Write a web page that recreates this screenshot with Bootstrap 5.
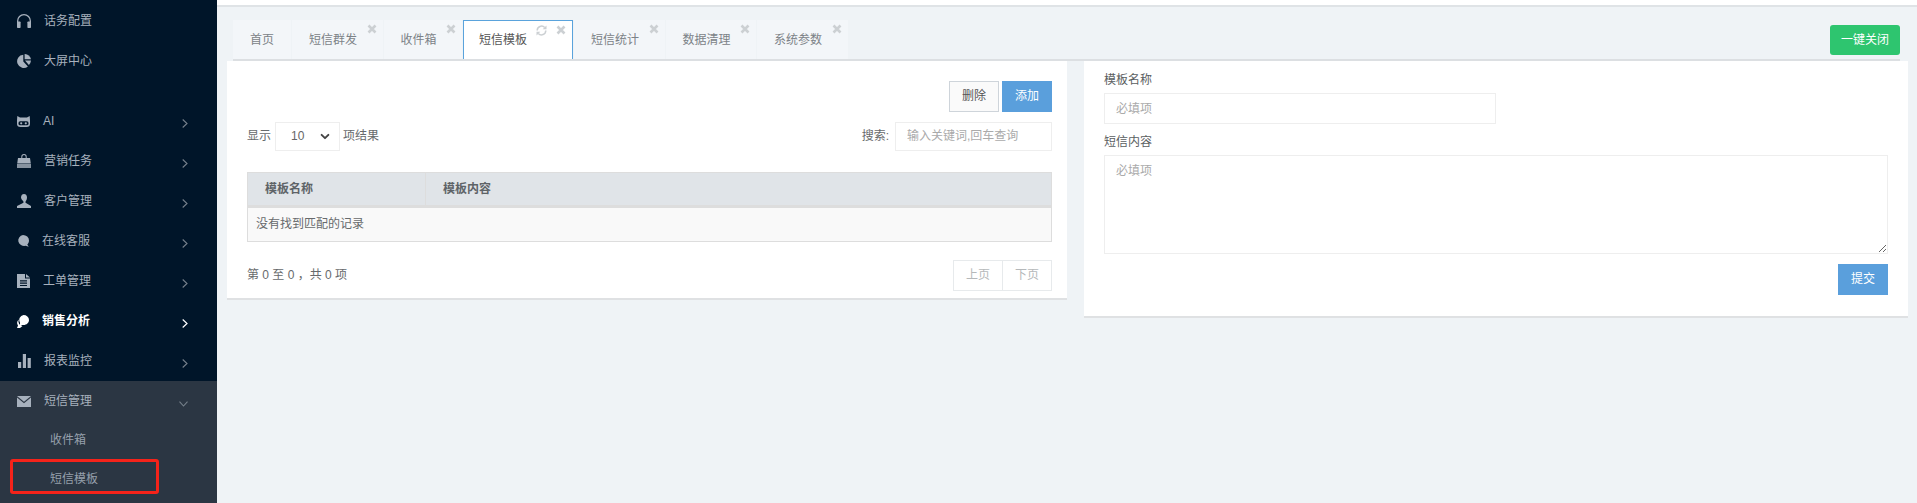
<!DOCTYPE html>
<html lang="zh-CN">
<head>
<meta charset="utf-8">
<title>短信模板</title>
<link href="https://cdn.jsdelivr.net/npm/bootstrap@5.3.0/dist/css/bootstrap.min.css" rel="stylesheet">
<style>
html,body{height:503px;overflow:hidden}
body{font:12px/1.4 "Liberation Sans","Noto Sans CJK SC",sans-serif;color:#676a6c;background:#eff3f6}
.shell{height:503px}
.side{width:217px;flex:none;background:#001529;height:503px;position:relative;padding-top:1px}
.side-item{height:40px;padding-left:17px;color:#a7b1bd;display:flex;align-items:center}
.side-item svg.ic{fill:#a7b1bd;flex:none;margin-right:13px}
.side-item .ch{margin-left:auto;margin-right:29px;flex:none;position:relative;top:2px}
.side-item.hot{color:#fff;font-weight:700}
.side-item.hot svg.ic{fill:#fff}
.side-gap{height:20px}
.side-open{background:#2b3643;height:122px}
.side-sub{height:39px;padding-left:50px;color:#96a0ac;display:flex;align-items:center}
.side-sub:first-of-type{margin-top:-1px}
.red-mark{position:absolute;left:10px;top:459px;width:149px;height:35px;border:3px solid #f5231a;border-radius:3px}
.work{min-width:0}
.top-strip{height:7px;background:#fff;border-bottom:2px solid #dfe3e6}
.tabbar{margin:0 17px 0 16px;height:54px;border-bottom:2px solid #dcdfe2;align-items:flex-end}
.tabx{height:39px;background:#f3f6f9;color:#7c8287;margin-right:1px;padding:0 17px;position:relative;display:flex;align-items:center;padding-top:1px}
.tabx.cl{padding-right:25.5px}
.tabx.on{background:#fff;color:#555;border:1px solid #5aa3dc;border-bottom:0;padding:1px 45px 0 15px}
.x-mark{position:absolute;top:4px;right:6px;width:10px;height:10px}
.re-mark{position:absolute;top:4px;right:25px;width:11px;height:11px}
.shut-btn{margin-left:auto;margin-bottom:4px;width:70px;height:30px;padding:0;font-size:12px;background:#2ec56f;border:0;color:#fff;border-radius:3px}
.panes{display:grid;grid-template-columns:840px 824px;column-gap:17px;margin-left:10px;align-items:start}
.pane{border:0;border-bottom:2px solid #dfe1e3;border-radius:0;background:#fff}
.pane-l{height:239px;padding:20px 15px 0 20px}
.pane-r{height:257px;padding:0 20px 0 20px}
.act-row{gap:3px}
.sq-btn{width:50px;height:31px;padding:0;font-size:12px;border-radius:0;line-height:29px}
.btn-gray{background:#fafafa;border:1px solid #ced4da;color:#555}
.btn-sky,.btn-sky:hover{background:#5a9fdc;border:1px solid #5a9fdc;color:#fff}
.row-len{margin-top:9px;height:30px}
.form-select.len-sel{width:65px;height:29px;padding:0 0 0 15px;font-size:12px;margin:0 3px 0 4px;border:1px solid #eee;border-radius:0;color:#666;background-position:right 8px center;background-size:12px 9px;background-image:url("data:image/svg+xml,%3csvg xmlns='http://www.w3.org/2000/svg' viewBox='0 0 16 16'%3e%3cpath fill='none' stroke='%23444' stroke-linecap='round' stroke-linejoin='round' stroke-width='3.4' d='m2 5 6 6 6-6'/%3e%3c/svg%3e")}
.form-control.plain{border:1px solid #eee;border-radius:0;font-size:12px;box-shadow:none;padding:0 11px;color:#666}
.form-control.plain::placeholder{color:#aaa}
.q-inp{width:157px;height:29px;margin-left:6px}
.table.grid-tb{margin:21px 0 0;width:805px;border-color:#ddd;table-layout:fixed;font-size:12px;color:#676a6c}
.table.grid-tb th{background:#e0e4e8;height:34px;padding:0 17px;vertical-align:middle;font-weight:700;color:#5e6367;border-width:1px 1px 3px;border-color:#ddd;--bs-table-bg:#e0e4e8}
.table.grid-tb td{background:#f9f9f9;height:35px;padding:0 8px;vertical-align:middle;border-color:#ddd;--bs-table-bg:#f9f9f9;color:#676a6c}
.foot-row{margin-top:18px}
.pager-x{margin:0}
.pager-x .page-link{width:50px;height:31px;padding:0;text-align:center;line-height:29px;font-size:12px;border-radius:0!important;border-color:#e7eaec;color:#b5b8ba;background:#fff}
.lab{margin:0;height:32px;line-height:38px;color:#5a5e61}
.pane-r .lab{display:block}
.pane-r .lab.two{height:31px;line-height:36px;margin-top:0}
.nm-inp{width:392px;height:31px}
.ta-inp{width:784px;height:99px;padding:6px 11px!important;resize:both}
.sub-row{margin-top:10px}
</style>
</head>
<body>
<div class="shell d-flex">
  <aside class="side">
    <div class="side-item"><svg class="ic" width="14" height="14" viewBox="0 0 14 14"><path d="M0 9V7a7 7 0 0 1 14 0v2h-1.300V7a5.700 5.700 0 0 0-11.400 0v2z"/><rect x="0" y="7.500" width="3.600" height="6.500" rx=".8"/><rect x="10.400" y="7.500" width="3.600" height="6.500" rx=".8"/></svg>话务配置</div>
    <div class="side-item"><svg class="ic" width="14" height="14" viewBox="0 0 14 14"><path d="M6.300.7v6.800l4.600 4.900A6.600 6.600 0 1 1 6.300.7z"/><path d="M7.600 0A6.300 6.300 0 0 1 14 5.300H7.600z"/><path d="M8 6.600h6a6.400 6.400 0 0 1-2.100 4.300z"/></svg>大屏中心</div>
    <div class="side-gap"></div>
    <div class="side-item"><svg class="ic" width="13" height="11" viewBox="0 0 13 11"><path d="M.3 0 3 1.500h7L12.700 0l.3 4.500V8q0 3-3.500 3h-6Q0 11 0 8V4.500z"/><rect x="1.500" y="5.300" width="10" height="4" rx="1.600" fill="#001529"/><circle cx="4.200" cy="7.300" r="1.100"/><circle cx="8.800" cy="7.300" r="1.100"/></svg>AI<svg class="ch" width="6" height="9" viewBox="0 0 6 9"><path d="m.7.500 4.300 4-4.300 4" fill="none" stroke="#76808b" stroke-width="1.100"/></svg></div>
    <div class="side-item"><svg class="ic" width="14" height="14" viewBox="0 0 14 14"><path d="M4.300 4V2.700a2.700 2.700 0 0 1 5.400 0V4h-1V2.700a1.700 1.700 0 0 0-3.400 0V4z"/><path d="M1 4h12l.8 5.400H.2z"/><path d="M0 10h14v4H0z" opacity=".8"/></svg>营销任务<svg class="ch" width="6" height="9" viewBox="0 0 6 9"><path d="m.7.500 4.300 4-4.300 4" fill="none" stroke="#76808b" stroke-width="1.100"/></svg></div>
    <div class="side-item"><svg class="ic" width="14" height="14" viewBox="0 0 14 14"><path d="M7 0c2 0 3 1.500 3 3.600 0 1.500-.6 3-1.400 3.800-.3.500-.1 1.300.4 1.600L14 12v2H0v-2l6-3c.5-.3.700-1.100.4-1.600C5.600 6.600 4 5.100 4 3.600 4 1.500 5 0 7 0z"/></svg>客户管理<svg class="ch" width="6" height="9" viewBox="0 0 6 9"><path d="m.7.500 4.300 4-4.300 4" fill="none" stroke="#76808b" stroke-width="1.100"/></svg></div>
    <div class="side-item"><svg class="ic" width="12" height="12" viewBox="0 0 12 12"><path d="M6 0a6 5.500 0 0 1 6 5.500c0 1.600-.7 3-1.700 4l1.400 2.300-3.200-1A6 5.500 0 1 1 6 0z"/></svg>在线客服<svg class="ch" width="6" height="9" viewBox="0 0 6 9"><path d="m.7.500 4.300 4-4.300 4" fill="none" stroke="#76808b" stroke-width="1.100"/></svg></div>
    <div class="side-item"><svg class="ic" width="13" height="14" viewBox="0 0 13 14"><path fill-rule="evenodd" d="M0 0h8v4.500h5V14H0zM3 6.300v1.100h7V6.300zm0 2.300v1.100h7V8.600zm0 2.300V12h7v-1.100z"/><path d="M9 0l4 3.500H9z"/></svg>工单管理<svg class="ch" width="6" height="9" viewBox="0 0 6 9"><path d="m.7.500 4.300 4-4.300 4" fill="none" stroke="#76808b" stroke-width="1.100"/></svg></div>
    <div class="side-item hot"><svg class="ic" width="12" height="13" viewBox="0 0 12 13"><path d="M6.500 0A5.500 5 0 0 1 12 5c0 2.700-2.400 5-5.500 5-.4 0-.9 0-1.300-.1L3 11V7.500A5 5 0 0 1 6.500 0z"/><path d="M2 4.500A4.600 4.600 0 0 0 4 10.500l1.500.5L3 13H0l1-2.500A4.500 4.500 0 0 1 2 4.500z"/></svg>销售分析<svg class="ch" width="6" height="9" viewBox="0 0 6 9"><path d="m.7.500 4.300 4-4.300 4" fill="none" stroke="#fff" stroke-width="1.200"/></svg></div>
    <div class="side-item"><svg class="ic" width="14" height="14" viewBox="0 0 14 14" style="margin-left:1px;margin-right:12px"><rect x="0" y="8" width="3.200" height="6"/><rect x="4.800" y="0" width="3.200" height="14"/><rect x="9.600" y="4" width="3.200" height="10"/></svg>报表监控<svg class="ch" width="6" height="9" viewBox="0 0 6 9"><path d="m.7.500 4.300 4-4.300 4" fill="none" stroke="#76808b" stroke-width="1.100"/></svg></div>
    <div class="side-open">
      <div class="side-item"><svg class="ic" width="14" height="11" viewBox="0 0 14 11"><path d="M0 0h14L7 5.700z"/><path d="M0 1.600V11h14V1.600L7 7.300z"/></svg>短信管理<svg class="ch" width="9" height="6" viewBox="0 0 9 6" style="margin-right:29px;top:3px"><path d="m.5.700 4 4.300 4-4.300" fill="none" stroke="#76808b" stroke-width="1.100"/></svg></div>
      <div class="side-sub">收件箱</div>
      <div class="side-sub">短信模板</div>
    </div>
    <div class="red-mark"></div>
  </aside>
  <main class="work flex-grow-1">
    <div class="top-strip"></div>
    <div class="tabbar d-flex">
      <div class="tabx">首页</div>
      <div class="tabx cl">短信群发<svg class="x-mark" viewBox="0 0 10 10"><path d="m1.500 1.500 7 7m0-7-7 7" stroke="#ccd0d3" stroke-width="2.600"/></svg></div>
      <div class="tabx cl">收件箱<svg class="x-mark" viewBox="0 0 10 10"><path d="m1.500 1.500 7 7m0-7-7 7" stroke="#ccd0d3" stroke-width="2.600"/></svg></div>
      <div class="tabx on">短信模板<svg class="re-mark" viewBox="0 0 11 11"><path d="M1.200 5.500A4.300 4.300 0 0 1 8.700 2.600M9.800 5.500A4.300 4.300 0 0 1 2.300 8.400" fill="none" stroke="#ccd0d3" stroke-width="1.500"/><path d="M10.500.5v3.800H6.700zM.5 10.500V6.700h3.800z" fill="#ccd0d3"/></svg><svg class="x-mark" viewBox="0 0 10 10"><path d="m1.500 1.500 7 7m0-7-7 7" stroke="#ccd0d3" stroke-width="2.600"/></svg></div>
      <div class="tabx cl">短信统计<svg class="x-mark" viewBox="0 0 10 10"><path d="m1.500 1.500 7 7m0-7-7 7" stroke="#ccd0d3" stroke-width="2.600"/></svg></div>
      <div class="tabx cl">数据清理<svg class="x-mark" viewBox="0 0 10 10"><path d="m1.500 1.500 7 7m0-7-7 7" stroke="#ccd0d3" stroke-width="2.600"/></svg></div>
      <div class="tabx cl">系统参数<svg class="x-mark" viewBox="0 0 10 10"><path d="m1.500 1.500 7 7m0-7-7 7" stroke="#ccd0d3" stroke-width="2.600"/></svg></div>
      <button type="button" class="btn shut-btn">一键关闭</button>
    </div>
    <div class="panes">
      <section class="card pane pane-l">
        <div class="d-flex justify-content-end act-row"><button type="button" class="btn sq-btn btn-gray">删除</button><button type="button" class="btn sq-btn btn-sky">添加</button></div>
        <div class="row-len d-flex justify-content-between align-items-center">
          <div class="d-flex align-items-center">显示<select class="form-select len-sel"><option>10</option></select>项结果</div>
          <div class="d-flex align-items-center">搜索:<input class="form-control plain q-inp" placeholder="输入关键词,回车查询"></div>
        </div>
        <table class="table table-bordered grid-tb">
          <colgroup><col style="width:178px"><col></colgroup>
          <thead><tr><th>模板名称</th><th>模板内容</th></tr></thead>
          <tbody><tr><td colspan="2">没有找到匹配的记录</td></tr></tbody>
        </table>
        <div class="foot-row d-flex justify-content-between align-items-center">
          <div>第 0 至 0 ，共 0 项</div>
          <ul class="pagination pager-x"><li class="page-item disabled"><span class="page-link">上页</span></li><li class="page-item disabled"><span class="page-link">下页</span></li></ul>
        </div>
      </section>
      <section class="card pane pane-r">
        <label class="lab">模板名称</label>
        <input class="form-control plain nm-inp" placeholder="必填项">
        <label class="lab two">短信内容</label>
        <textarea class="form-control plain ta-inp" placeholder="必填项"></textarea>
        <div class="sub-row d-flex justify-content-end"><button type="button" class="btn sq-btn btn-sky">提交</button></div>
      </section>
    </div>
  </main>
</div>
<script src="https://cdn.jsdelivr.net/npm/bootstrap@5.3.0/dist/js/bootstrap.bundle.min.js"></script>
</body>
</html>
